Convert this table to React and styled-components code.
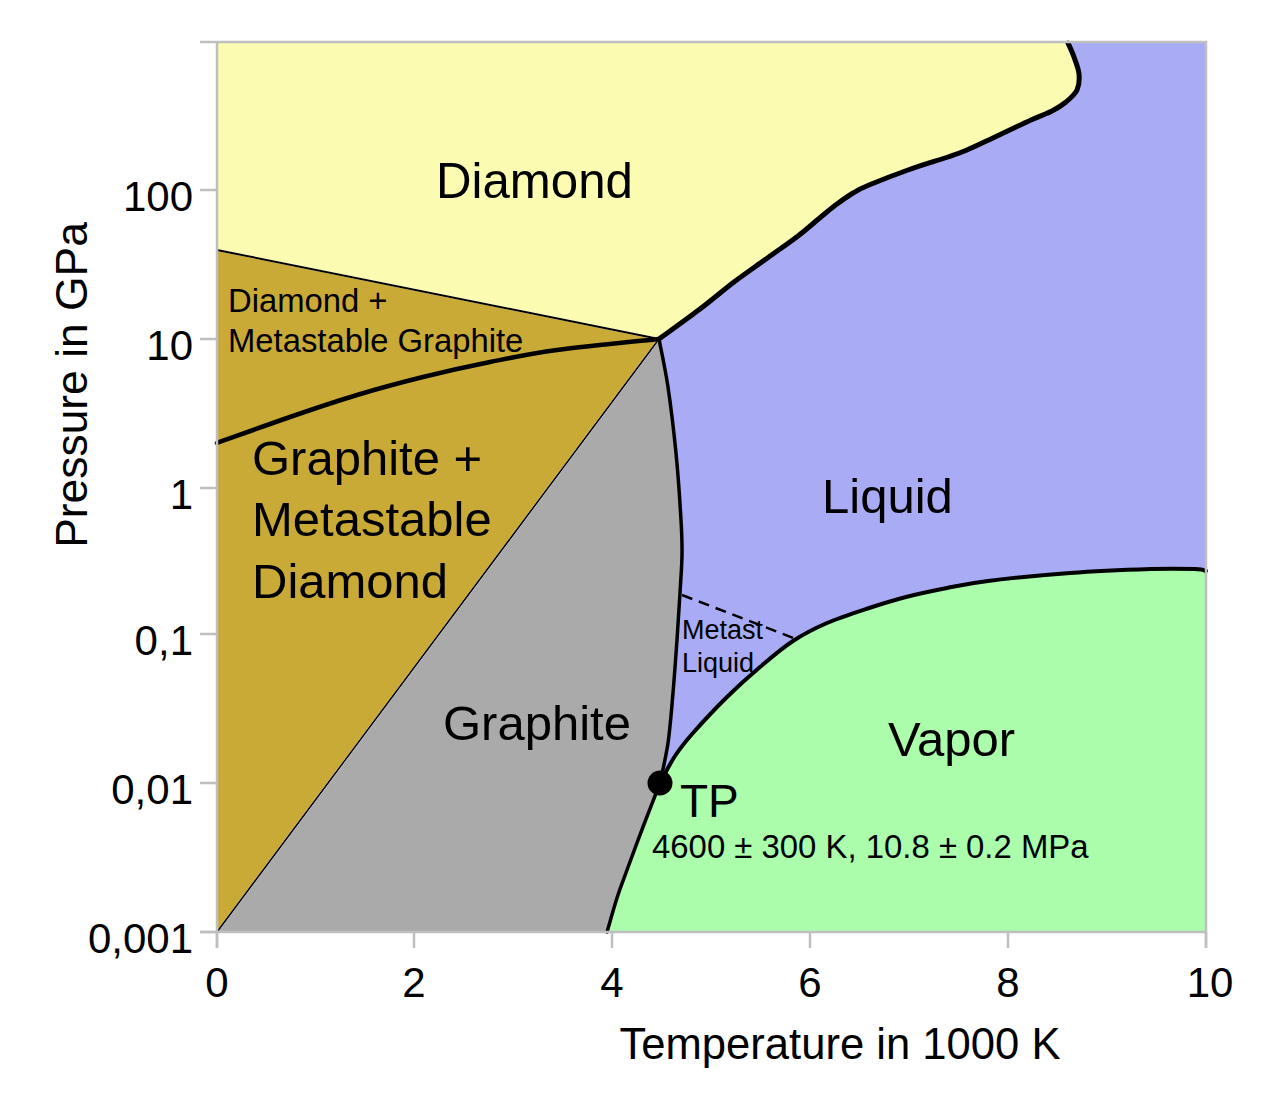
import React from "react";
import styled, { createGlobalStyle } from "styled-components";

const Global = createGlobalStyle`
  html, body { margin: 0; padding: 0; background: #ffffff; }
  #root { width: 1280px; height: 1094px; }
`;

const Page = styled.div`
  width: 1280px;
  height: 1094px;
  display: flex;
  background: #ffffff;
`;

const Chart = styled.svg`
  display: block;
  width: 1280px;
  height: 1094px;
  font-family: "Liberation Sans", Arial, sans-serif;
`;

const Region = styled.path`
  fill: ${(p) => p.$fill};
  stroke: #ffffff;
  stroke-width: 2;
  stroke-linejoin: round;
`;

const Boundary = styled.path`
  fill: none;
  stroke: #000000;
  stroke-width: ${(p) => p.$w || 4};
  stroke-linejoin: round;
  stroke-linecap: ${(p) => (p.$dash ? "butt" : "round")};
  stroke-dasharray: ${(p) => p.$dash || "none"};
`;

const AxisLine = styled.line`
  stroke: #bfbfbf;
  stroke-width: 2.5;
`;

const Label = styled.text`
  font-size: ${(p) => p.$size}px;
  fill: #000000;
  text-anchor: ${(p) => p.$anchor || "start"};
`;

const TPDot = styled.circle`
  fill: #000000;
`;

const smooth = (pts) => {
  let d = "";
  for (let i = 0; i < pts.length - 1; i++) {
    const p0 = pts[i - 1] || pts[i];
    const p1 = pts[i];
    const p2 = pts[i + 1];
    const p3 = pts[i + 2] || p2;
    const c1 = [p1[0] + (p2[0] - p0[0]) / 6, p1[1] + (p2[1] - p0[1]) / 6];
    const c2 = [p2[0] - (p3[0] - p1[0]) / 6, p2[1] - (p3[1] - p1[1]) / 6];
    d += ` C${c1[0].toFixed(1)},${c1[1].toFixed(1)} ${c2[0].toFixed(1)},${c2[1].toFixed(1)} ${p2[0]},${p2[1]}`;
  }
  return d;
};
const line = (pts) => `M${pts[0][0]},${pts[0][1]}` + smooth(pts);
const rev = (pts) => [...pts].reverse();

// diamond melting curve: triple point -> top
const D = [
  [659, 339], [700, 309], [734, 282], [766, 259], [798, 236], [822, 216],
  [837, 204], [853, 193], [869, 185], [908, 170], [948, 157], [967, 150],
  [995, 137], [1031, 120], [1052, 111], [1066, 102], [1077, 90], [1079, 74],
  [1074, 57], [1068, 43],
];
// graphite melting line: triple point -> TP
const M = [
  [659, 339], [668, 387], [676, 453], [681, 520], [682, 555], [680, 593],
  [677, 640], [673, 693], [668, 743], [660, 783],
];
// liquid-vapor
const LV = [
  [660, 783], [675, 756], [693, 733], [727, 697], [760, 667], [793, 641],
  [827, 623], [866, 609], [906, 597], [947, 588], [988, 581], [1070, 573],
  [1151, 569], [1195, 569], [1206, 571],
];
// sublimation
const S = [
  [660, 783], [643, 827], [627, 870], [617, 898], [607, 932],
];
// diamond-graphite equilibrium
const E = [
  [217, 443], [290, 417], [357, 395], [423, 377], [490, 362], [557, 350], [659, 339],
];

const yellowPath = `M217,42 L1068,42 ${smooth(rev(D))} L217,250 Z`;
const vaporPath = `M660,783 ${smooth(LV)} L1206,932 L607,932 ${smooth(rev(S))} Z`;
const grayPath = `M659,339 L217,932 L607,932 ${smooth(rev(S))} ${smooth(rev(M))} Z`;
const goldPath = `M217,250 L659,339 L217,932 Z`;

const yTicks = [
  { y: 190, t: "100" },
  { y: 339, t: "10" },
  { y: 488, t: "1" },
  { y: 634, t: "0,1" },
  { y: 783, t: "0,01" },
  { y: 932, t: "0,001" },
];
const xTicks = [
  { x: 217, t: "0" },
  { x: 414, t: "2" },
  { x: 612, t: "4" },
  { x: 810, t: "6" },
  { x: 1008, t: "8" },
  { x: 1206, t: "10" },
];

export default function App() {
  return (
    <Page>
      <Global />
      <Chart viewBox="0 0 1280 1094">
        <rect x="217" y="42" width="989" height="890" fill="#a9acf4" />
        <Region d={yellowPath} $fill="#fbfbb2" />
        <Region d={vaporPath} $fill="#abfcab" />
        <Region d={grayPath} $fill="#aaaaaa" />
        <Region d={goldPath} $fill="#c9aa37" />

        <Boundary d="M217,250 L659,339" $w={2} />
        <Boundary d="M659,339 L217,932" $w={1.6} />
        <Boundary d={line(E)} $w={4.5} />
        <Boundary d={line(D)} $w={5} />
        <Boundary d={line(M)} $w={3.5} />
        <Boundary d={line(LV)} $w={4} />
        <Boundary d={line(S)} $w={3.5} />
        <Boundary d="M682,595 L796,639" $w={2.5} $dash="11 7" />
        <TPDot cx="660" cy="783" r="12.5" />

        <AxisLine x1="200" y1="42" x2="1207" y2="42" />
        <AxisLine x1="1206" y1="42" x2="1206" y2="948" />
        <AxisLine x1="217" y1="42" x2="217" y2="948" />
        <AxisLine x1="200" y1="932" x2="1207" y2="932" />
        {yTicks.map((k) => (
          <AxisLine key={k.t} x1="200" y1={k.y} x2="217" y2={k.y} />
        ))}
        {xTicks.map((k) => (
          <AxisLine key={k.t} x1={k.x} y1="932" x2={k.x} y2="948" />
        ))}

        {yTicks.map((k) => (
          <Label key={k.t} x="193" y={k.y + 21} $size={42} $anchor="end">
            {k.t}
          </Label>
        ))}
        {xTicks.map((k) => (
          <Label key={k.t} x={k.t === "10" ? 1210 : k.x} y="997" $size={42} $anchor="middle">
            {k.t}
          </Label>
        ))}
        <Label x="840" y="1059" $size={43.6} $anchor="middle">
          Temperature in 1000 K
        </Label>
        <Label x="87" y="385" $size={44.4} $anchor="middle" transform="rotate(-90 87 385)">
          Pressure in GPa
        </Label>

        <Label x="436" y="198" $size={49.2}>Diamond</Label>
        <Label x="228" y="312" $size={32.8}>Diamond +</Label>
        <Label x="228" y="352" $size={32.8}>Metastable Graphite</Label>
        <Label x="252" y="475" $size={49}>Graphite +</Label>
        <Label x="252" y="536" $size={49}>Metastable</Label>
        <Label x="252" y="598" $size={49}>Diamond</Label>
        <Label x="443" y="740" $size={49}>Graphite</Label>
        <Label x="822" y="513" $size={49}>Liquid</Label>
        <Label x="888" y="756" $size={49}>Vapor</Label>
        <Label x="682" y="639" $size={27}>Metast</Label>
        <Label x="682" y="672" $size={27}>Liquid</Label>
        <Label x="680" y="817" $size={46}>TP</Label>
        <Label x="652" y="858" $size={32.9}>4600 ± 300 K, 10.8 ± 0.2 MPa</Label>
      </Chart>
    </Page>
  );
}
